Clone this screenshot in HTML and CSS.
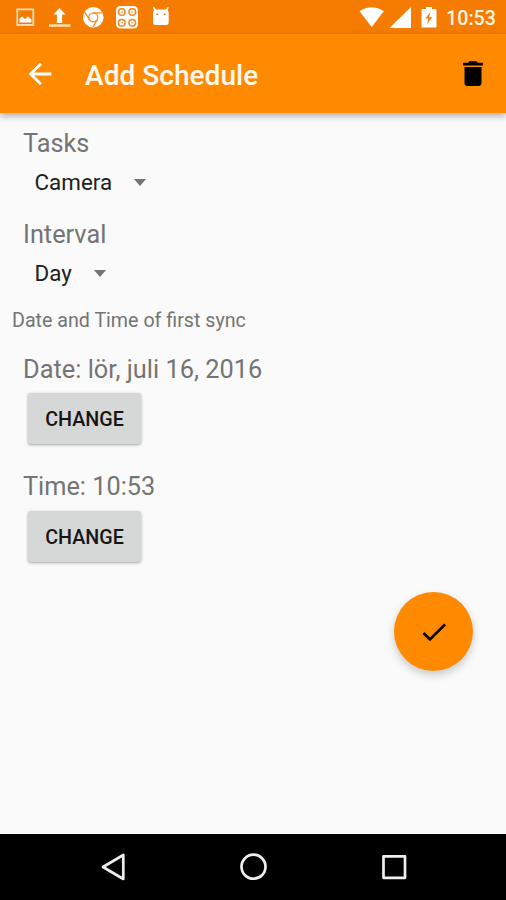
FILE: index.html
```
<!DOCTYPE html>
<html lang="en">
<head>
<meta charset="utf-8">
<title>Add Schedule</title>
<link rel="stylesheet" href="styles.css">
</head>
<body>
<div class="screen">
  <div class="status-bar">
    <svg class="notifications" width="180" height="34" viewBox="0 0 180 34" fill="#fff">
      <path d="M17.3 9.300h16v15.700h-16z" fill="none" stroke="#ffdcb5" stroke-width="1.800"/>
      <path d="M19.500 22.500v-4l2.500-2 3 2.500 3-2.500 3.500 3v3z"/>
      <path d="M59.500 8l6 6.500h-3.400v8.500h-5.200v-8.500h-3.400z"/>
      <path d="M49 24.300h21.500v2.500H49z" fill="#ffe3ae"/>
      <circle cx="93.300" cy="17.300" r="10.300"/>
      <g fill="none" stroke="#f98b20" stroke-width="1.300">
        <circle cx="93.300" cy="17.300" r="4.500"/>
        <path d="M93.300 12.800h9M89.400 19.600l-4.800-7.700M97.200 19.600l-4.400 7.700"/>
      </g>
      <rect x="116" y="6" width="22" height="22.500" rx="4.500"/>
      <g fill="none" stroke="#f78418" stroke-width="1.500">
        <circle cx="121.800" cy="12" r="3.300"/><circle cx="132.300" cy="12" r="3.300"/>
        <circle cx="121.800" cy="22.800" r="3.300"/><circle cx="132.300" cy="22.800" r="3.300"/>
        <path d="M121 12h2M131.300 12h2M121 22.800h2M131.300 22.800h2" stroke-width="1"/>
      </g>
      <path d="M153 13q0-1.500 1-2.500l-1-3.300 1-.4 1.800 2.700h10.200l1.700-2.700 1 .4-1 3.300q1 1 1 2.500v9.500q0 2.500-2.500 2.500h-10.700q-2.500 0-2.500-2.500z"/>
      <path d="M156.300 13.500h1.700v1.500h-1.700zM163.800 13.500h1.700v1.500h-1.700z" fill="#f57c00"/>
    </svg>
    <div class="system">
      <svg width="80" height="34" viewBox="358 0 80 34" fill="#fff">
        <path d="M359.500 11.300q12.200-8.300 24.300 0L371.700 27z"/>
        <path d="M411 7v21h-21.500z"/>
        <path d="M422.500 9h3.500V7h6v2h3.500q1 0 1 1v16.500q0 1-1 1h-13q-1 0-1-1V10q0-1 1-1z"/>
        <path d="M430.500 12l-5.200 6.500h3.200l-1.500 5.700 5.300-7h-3.300z" fill="#f57c00"/>
      </svg>
      <span class="clock">10:53</span>
    </div>
  </div>
  <header class="app-bar">
    <svg class="back" width="34" height="34" viewBox="0 0 24 24" fill="#fff"><path d="M20 11H7.830l5.590-5.590L12 4l-8 8 8 8 1.410-1.410L7.830 13H20v-2z"/></svg>
    <h1>Add Schedule</h1>
    <svg class="delete" width="34" height="34" viewBox="0 0 24 24"><path d="M6 18.500c0 1.100.9 2 2 2h8c1.100 0 2-.9 2-2V7H6v11.500zM19 4h-3.500l-1-1h-5l-1 1H5v2h14V4z"/></svg>
  </header>
  <main>
    <div class="label tasks">Tasks</div>
    <div class="spinner">Camera<i class="arrow"></i></div>
    <div class="label interval">Interval</div>
    <div class="spinner">Day<i class="arrow"></i></div>
    <div class="section">Date and Time of first sync</div>
    <div class="label date">Date: lör, juli 16, 2016</div>
    <button>CHANGE</button>
    <div class="label time">Time: 10:53</div>
    <button>CHANGE</button>
    <div class="fab">
      <svg width="32" height="32" viewBox="0 0 24 24"><path d="M9 16.170L4.830 12l-1.420 1.410L9 19 21 7l-1.410-1.410z"/></svg>
    </div>
  </main>
  <nav class="nav-bar">
    <svg width="506" height="66" viewBox="0 0 506 66" fill="none" stroke="#eee" stroke-width="2.700" stroke-linejoin="round">
      <path d="M123.300 21v24L103 33z"/>
      <circle cx="253.500" cy="32.700" r="12"/>
      <rect x="383.500" y="22.300" width="21.500" height="21.500"/>
    </svg>
  </nav>
</div>
</body>
</html>
```
FILE: styles.css
```
body {
  margin: 0;
  font-family: Roboto, sans-serif;
}
.screen {
  width: 506px;
  height: 900px;
  display: flex;
  flex-direction: column;
  overflow: hidden;
  background: #fafafa;
}
svg {
  display: block;
  flex: none;
}
.status-bar {
  height: 34px;
  flex: none;
  display: flex;
  justify-content: space-between;
  background: #f57c00;
}
.system {
  display: flex;
  align-items: flex-start;
  padding-right: 11px;
}
.clock {
  width: 49px;
  margin-left: 8px;
  padding-top: 2px;
  color: #fff3e3;
  font-size: 19.700px;
  font-weight: 500;
  line-height: 34px;
}
.app-bar {
  height: 79px;
  flex: none;
  display: flex;
  align-items: center;
  box-sizing: border-box;
  padding: 0 16px 0 23px;
  background: #ff8a00;
  box-shadow: 0 3px 7px rgba(0, 0, 0, .32);
  z-index: 1;
}
.app-bar h1 {
  flex: 1;
  margin: 5px 0 0 28px;
  color: #fff8ee;
  font-size: 28.100px;
  font-weight: 500;
  line-height: 34px;
}
main {
  flex: 1;
  display: flex;
  flex-direction: column;
  align-items: flex-start;
  padding-top: 16px;
}
.label {
  margin-left: 23px;
  color: #747474;
  font-size: 25.300px;
  line-height: 30px;
}
.spinner {
  display: flex;
  align-items: center;
  margin: 7px 0 0 34.500px;
  color: #202020;
  font-size: 22.400px;
  line-height: 32px;
}
.arrow {
  margin-left: 22px;
  border: 6.500px solid transparent;
  border-top: 7px solid #747474;
  border-bottom: 0;
}
.interval {
  margin-top: 22px;
}
.section {
  margin: 20px 0 0 12px;
  color: #747474;
  font-size: 19.650px;
  line-height: 24px;
}
.date {
  margin-top: 21px;
  font-size: 25.400px;
}
.time {
  margin-top: 28px;
}
button {
  width: 113px;
  height: 51px;
  margin: 9px 0 0 28px;
  padding: 1px 0 0;
  border: 0;
  border-radius: 3px;
  background: #d6d7d7;
  color: #151515;
  font: 500 19.700px Roboto, sans-serif;
  box-shadow: 0 1px 3px rgba(0, 0, 0, .35);
}
.fab {
  display: flex;
  align-items: center;
  justify-content: center;
  align-self: flex-end;
  width: 79px;
  height: 79px;
  margin: 30px 33px 0 0;
  border-radius: 50%;
  background: #ff8a00;
  box-shadow: 0 4px 9px rgba(0, 0, 0, .2);
}
.nav-bar {
  height: 66px;
  flex: none;
  background: #000;
}
```
